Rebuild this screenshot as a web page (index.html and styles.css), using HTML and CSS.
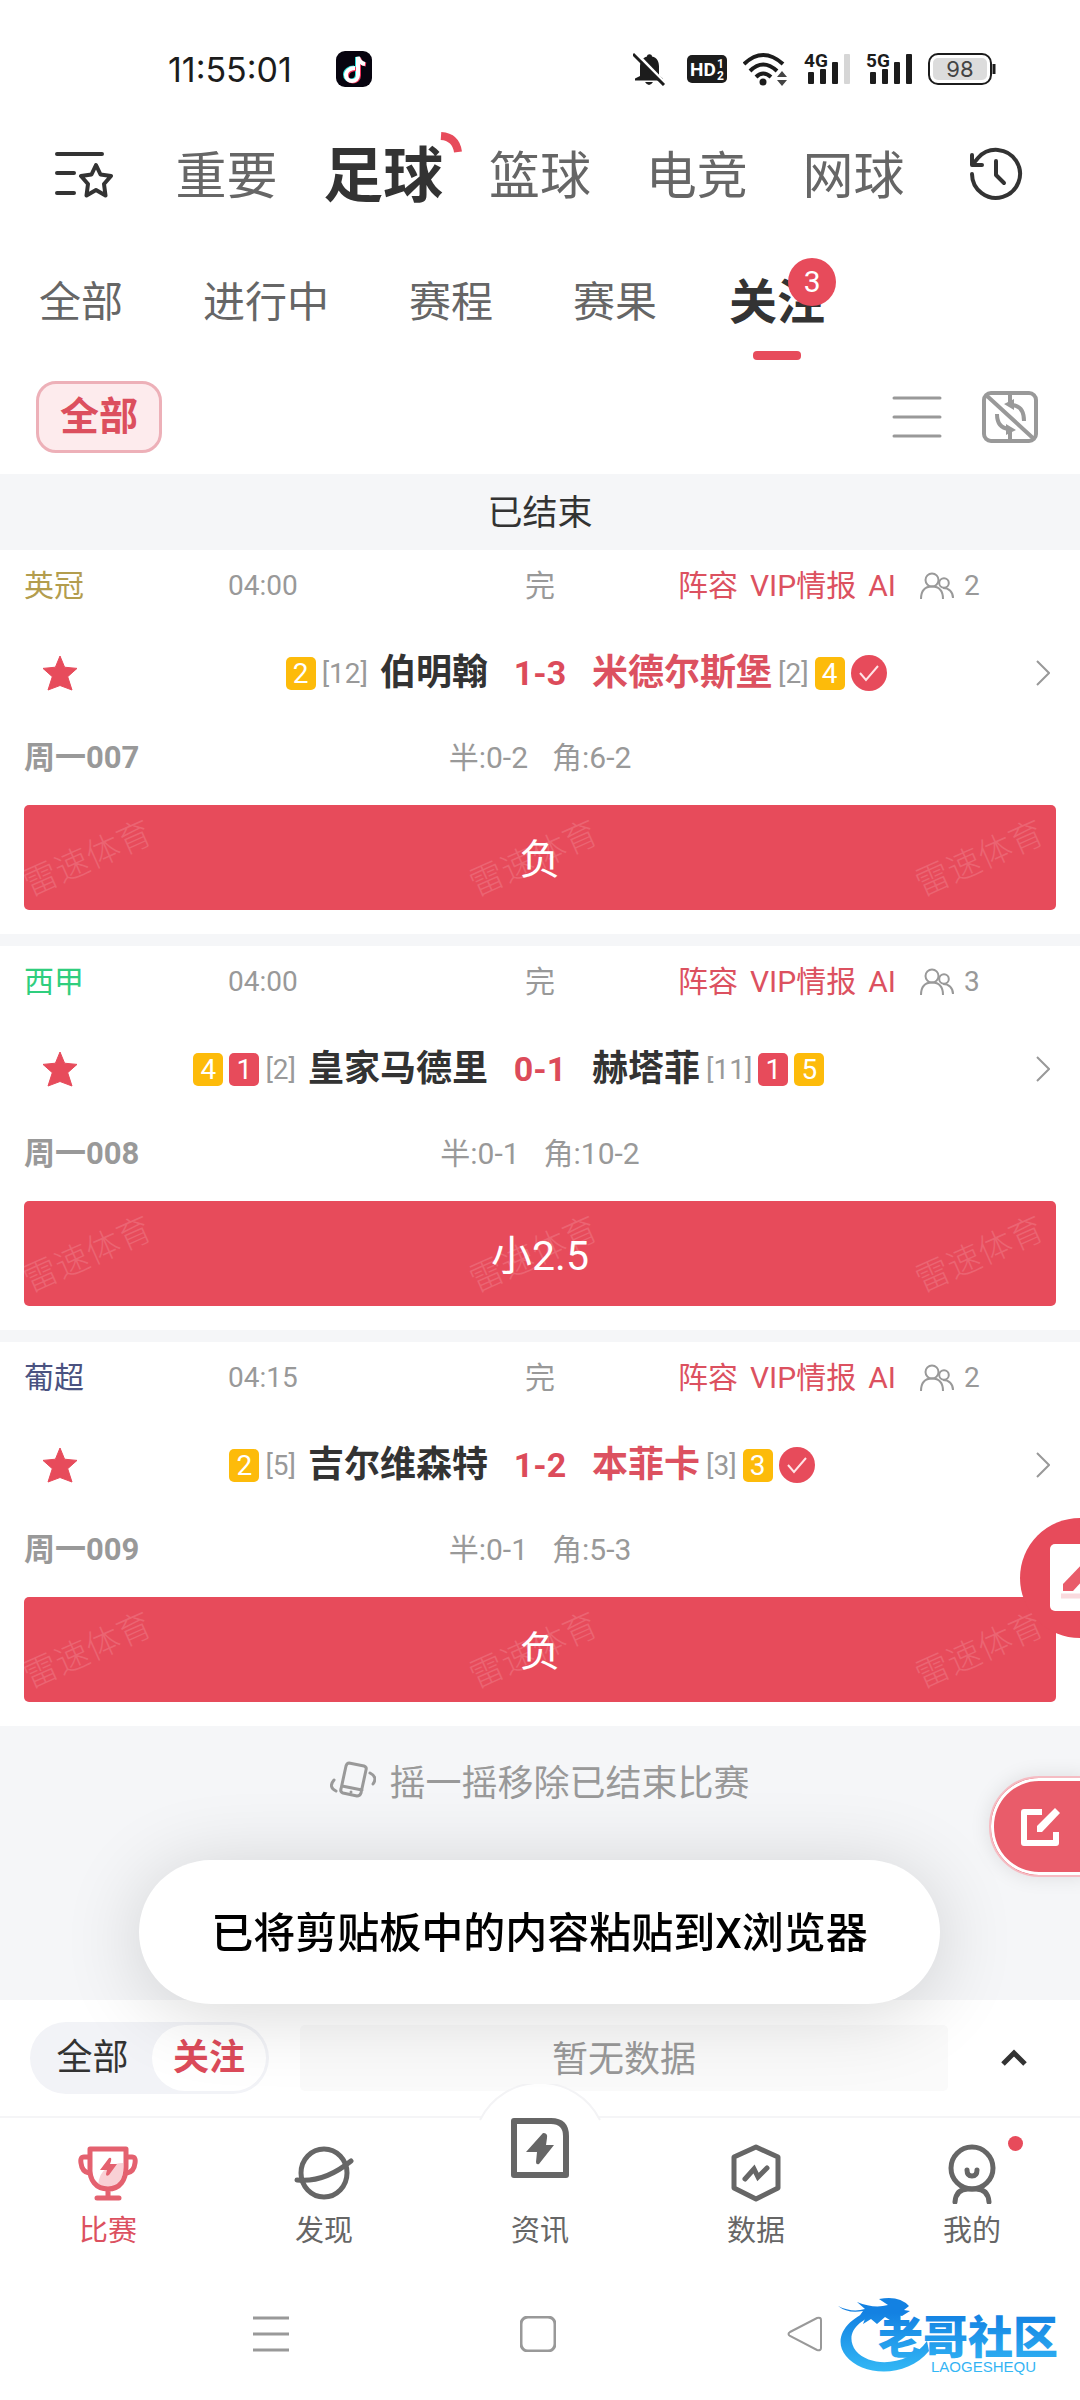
FILE: index.html
```html
<!DOCTYPE html>
<html lang="zh-CN">
<head>
<meta charset="utf-8">
<meta name="viewport" content="width=device-width, initial-scale=1">
<title>足球 - 关注</title>
<link rel="stylesheet" href="styles.css">
</head>
<body>
<svg class="sprite" aria-hidden="true">
  <symbol id="star" viewBox="0 0 36 36"><path d="M18 1l4.600 11.200 12.400 1.200-9.300 8.300 4.300 13.300L18 30.500 6 35l4.300-13.300L1 13.400l12.400-1.200z" fill="#e74b5b" stroke="#e74b5b" stroke-width="1" stroke-linejoin="round"/></symbol>
  <symbol id="people" viewBox="0 0 34 28"><g fill="none" stroke="#999" stroke-width="2"><circle cx="12" cy="8" r="6.500"/><path d="M1 27c0-8 4-12.500 11-12.500S23 19 23 27"/><circle cx="24" cy="11" r="4.800"/><path d="M23 16c6 0 10 4 10 10"/></g></symbol>
  <symbol id="win" viewBox="0 0 36 36"><circle cx="18" cy="18" r="18" fill="#e74b5b"/><path d="M9 18l6 7L27 11" fill="none" stroke="#ffe3e6" stroke-width="2"/></symbol>
  <symbol id="next" viewBox="0 0 14 26"><path d="M1 1l12 12L1 25" fill="none" stroke="#999" stroke-width="2"/></symbol>
</svg>
<div class="page">
  <div class="status">
    <span class="clock">11:55:01</span>
    <svg width="36" height="36" viewBox="0 0 36 36"><rect width="36" height="36" rx="9" fill="#07040f"/><g fill="none" stroke-width="4"><path d="M18 16.500c-5 0-9 3-9 7s3 6 6 6 6-2 6-6V6c1 4 3 6 7 6.500" stroke="#25e0dc"/><path d="M20 18c-5 0-9 3-9 7s3 5.500 6 5.500 6-2 6-6V7c1 4 3 6 7 6.500" stroke="#f0325a"/><path d="M19 17c-5 0-9 3-9 7s3 6 6 6 6-2 6-6V6c1 4 3 6.500 7 7" stroke="#fff"/></g></svg>
    <span class="grow"></span>
    <svg width="38" height="34" viewBox="0 0 38 34"><path d="M7 24V15c0-6 3-9.500 7-10.500 0-3 5-3 5 0 5 1 7 5 7 10v9l4 3v2H2v-2z" fill="#1c1c1c"/><path d="M12 30h8q-4 6-8 0z" fill="#1c1c1c"/><path d="M3 1l30 31" stroke="#fff" stroke-width="3"/><path d="M0 2l31 31" stroke="#1c1c1c" stroke-width="3"/></svg>
    <svg width="40" height="28" viewBox="0 0 40 28"><rect width="40" height="28" rx="5" fill="#1c1c1c"/><text class="glyph" x="3" y="21" font-size="19" fill="#fff">HD</text><text class="glyph" x="30" y="13" font-size="12" fill="#fff">1</text><text class="glyph" x="30" y="25" font-size="12" fill="#fff">2</text></svg>
    <svg width="45" height="34" viewBox="0 0 45 34"><g fill="none" stroke="#1c1c1c" stroke-width="4"><path d="M1 12Q20-6 40 12"/><path d="M7 19Q20 6 34 19"/><path d="M13 25Q20 18 28 25"/></g><circle cx="20" cy="30" r="3.500" fill="#1c1c1c"/><path d="M39 19l5 6H34zM39 34l5-6H34z" fill="#444"/></svg>
    <svg width="46" height="38" viewBox="0 0 46 38"><text class="glyph" x="0" y="17" font-size="19" fill="#1c1c1c">4G</text><g fill="#1c1c1c"><rect x="4" y="22" width="6" height="12" rx="1"/><rect x="16" y="19" width="6" height="15" rx="1"/><rect x="28" y="12" width="6" height="22" rx="1"/></g><rect x="40" y="4" width="6" height="30" rx="1" fill="#d6d6d6"/></svg>
    <svg width="46" height="38" viewBox="0 0 46 38"><text class="glyph" x="0" y="17" font-size="19" fill="#1c1c1c">5G</text><g fill="#1c1c1c"><rect x="4" y="22" width="6" height="12" rx="1"/><rect x="16" y="19" width="6" height="15" rx="1"/><rect x="28" y="12" width="6" height="22" rx="1"/><rect x="40" y="4" width="6" height="30" rx="1"/></g></svg>
    <svg width="68" height="32" viewBox="0 0 68 32"><rect x="1" y="1" width="62" height="30" rx="9" fill="#fff" stroke="#1c1c1c" stroke-width="2"/><rect x="5" y="5" width="54" height="22" rx="5" fill="#dcdcdc"/><path d="M66 11v10" stroke="#1c1c1c" stroke-width="3"/><text class="battery" x="32" y="24" text-anchor="middle">98</text></svg>
  </div>

  <header class="sports">
    <button class="side-left" aria-label="收藏列表"><svg width="58" height="48" viewBox="0 0 58 48"><g fill="none" stroke="#333" stroke-width="4" stroke-linecap="round" stroke-linejoin="round"><path d="M2 4h45M2 23h17M2 43h17"/><path d="M41 15l4.500 9.500L56 26l-7 8 1.500 11.500L41 40l-9.500 5.500L33 34l-7-8 10.500-1.500z"/></g></svg></button>
    <nav class="sport-tabs">
      <a href="#">重要</a>
      <a href="#" class="active">足球<svg class="arc" width="26" height="26" viewBox="0 0 26 26"><path d="M4 5Q19 6 21 21" fill="none" stroke="#e74b5b" stroke-width="8"/></svg></a>
      <a href="#">篮球</a>
      <a href="#">电竞</a>
      <a href="#">网球</a>
    </nav>
    <button class="side-right" aria-label="历史"><svg width="54" height="54" viewBox="0 0 54 54"><g fill="none" stroke="#333" stroke-width="4" stroke-linecap="round" stroke-linejoin="round"><path d="M3 27a24 24 0 1 0 6-16L4 17"/><path d="M3 8v10h10M27 14v14l8 8"/></g></svg></button>
  </header>

  <nav class="filters">
    <a href="#">全部</a>
    <a href="#">进行中</a>
    <a href="#">赛程</a>
    <a href="#">赛果</a>
    <a href="#" class="active">关注<span class="count">3</span></a>
  </nav>

  <div class="tools">
    <button class="chip">全部</button>
    <span class="grow"></span>
    <button aria-label="列表"><svg width="50" height="42" viewBox="0 0 50 42"><path d="M2 2h46M2 21h46M2 40h46" stroke="#999" stroke-width="3" stroke-linecap="round"/></svg></button>
    <button aria-label="隐藏动画"><svg width="56" height="52" viewBox="0 0 56 52"><g fill="none" stroke="#999" stroke-width="4"><rect x="2" y="2" width="52" height="48" rx="7"/><path d="M4 4l48 44M28 2v10M28 40v10M30 14q12 1 12 16M27 38q-12-1-12-15"/></g><path d="M22 13l10-5v11zM34 39l-10-6v11z" fill="#999"/></svg></button>
  </div>

  <main class="list">
    <h2 class="section">已结束</h2>

    <article class="match">
      <div class="meta">
        <div class="when"><span class="league gold">英冠</span><time>04:00</time></div>
        <span>完</span>
        <div class="tags"><a href="#">阵容</a><a href="#">VIP情报</a><a href="#">AI</a><span class="chat"><svg width="34" height="28"><use href="#people"/></svg>2</span></div>
      </div>
      <div class="teams">
        <button class="fav" aria-label="取消关注"><svg width="36" height="36"><use href="#star"/></svg></button>
        <div class="team home"><span class="card yellow">2</span><span class="rank">[12]</span><strong>伯明翰</strong></div>
        <span class="score">1-3</span>
        <div class="team away won"><strong>米德尔斯堡</strong><span class="rank">[2]</span><span class="card yellow">4</span><svg width="36" height="36"><use href="#win"/></svg></div>
        <button class="more" aria-label="详情"><svg width="14" height="26"><use href="#next"/></svg></button>
      </div>
      <div class="detail"><b>周一007</b><span class="stats"><span>半:0-2</span><span>角:6-2</span></span></div>
      <div class="result"><div class="marks"><span>雷速体育</span><span>雷速体育</span><span>雷速体育</span></div><span class="pick">负</span></div>
    </article>

    <article class="match">
      <div class="meta">
        <div class="when"><span class="league green">西甲</span><time>04:00</time></div>
        <span>完</span>
        <div class="tags"><a href="#">阵容</a><a href="#">VIP情报</a><a href="#">AI</a><span class="chat"><svg width="34" height="28"><use href="#people"/></svg>3</span></div>
      </div>
      <div class="teams">
        <button class="fav" aria-label="取消关注"><svg width="36" height="36"><use href="#star"/></svg></button>
        <div class="team home"><span class="card yellow">4</span><span class="card red">1</span><span class="rank">[2]</span><strong>皇家马德里</strong></div>
        <span class="score">0-1</span>
        <div class="team away"><strong>赫塔菲</strong><span class="rank">[11]</span><span class="card red">1</span><span class="card yellow">5</span></div>
        <button class="more" aria-label="详情"><svg width="14" height="26"><use href="#next"/></svg></button>
      </div>
      <div class="detail"><b>周一008</b><span class="stats"><span>半:0-1</span><span>角:10-2</span></span></div>
      <div class="result"><div class="marks"><span>雷速体育</span><span>雷速体育</span><span>雷速体育</span></div><span class="pick">小2.5</span></div>
    </article>

    <article class="match">
      <div class="meta">
        <div class="when"><span class="league navy">葡超</span><time>04:15</time></div>
        <span>完</span>
        <div class="tags"><a href="#">阵容</a><a href="#">VIP情报</a><a href="#">AI</a><span class="chat"><svg width="34" height="28"><use href="#people"/></svg>2</span></div>
      </div>
      <div class="teams">
        <button class="fav" aria-label="取消关注"><svg width="36" height="36"><use href="#star"/></svg></button>
        <div class="team home"><span class="card yellow">2</span><span class="rank">[5]</span><strong>吉尔维森特</strong></div>
        <span class="score">1-2</span>
        <div class="team away won"><strong>本菲卡</strong><span class="rank">[3]</span><span class="card yellow">3</span><svg width="36" height="36"><use href="#win"/></svg></div>
        <button class="more" aria-label="详情"><svg width="14" height="26"><use href="#next"/></svg></button>
      </div>
      <div class="detail"><b>周一009</b><span class="stats"><span>半:0-1</span><span>角:5-3</span></span></div>
      <div class="result"><div class="marks"><span>雷速体育</span><span>雷速体育</span><span>雷速体育</span></div><span class="pick">负</span></div>
    </article>

    <p class="shake"><svg width="46" height="38" viewBox="0 0 46 38"><g fill="none" stroke="#999" stroke-width="3" stroke-linecap="round" stroke-linejoin="round"><path d="M19 2l15 3q3 1 2 4l-5 23q-1 3-4 3l-14-3q-3-1-2-4l5-23q1-3 3-3zM12 25l20 4"/><path d="M4 19q-6 7 2 11M40 12q8 4 3 11"/></g><circle cx="21" cy="31" r="1.500" fill="#999"/></svg>摇一摇移除已结束比赛</p>
  </main>

  <div class="dock">
    <div class="switch"><button>全部</button><button class="on">关注</button></div>
    <div class="empty">暂无数据</div>
    <button class="expand" aria-label="展开"><svg width="28" height="18" viewBox="0 0 28 18"><path d="M3 15L14 4l11 11" fill="none" stroke="#333" stroke-width="5"/></svg></button>
  </div>

  <nav class="tabbar">
    <svg class="bump" width="134" height="44" viewBox="0 0 134 44"><path d="M7 36A67 67 0 0 1 127 36V44H7z" fill="#fff"/><path d="M7 36A67 67 0 0 1 127 36" fill="none" stroke="#f3f3f5" stroke-width="2"/></svg>
    <a href="#" class="active"><svg width="60" height="60" viewBox="0 0 60 60"><path d="M20 42q1-14 10-18 6-5 15-5v8q-1 14-15 17-6 1-10-2z" fill="#f9d0d5"/><g fill="none" stroke="#e4616f" stroke-width="5" stroke-linecap="round" stroke-linejoin="round"><path d="M12 5h36v18c0 13-6 22-18 22S11 36 12 23zM30 45v9M19 54h22"/><path d="M11 13H6q-4 0-3 6 1 9 8 10M49 13h5q4 0 3 6-1 9-8 10"/></g><path d="M31 14q3-1 2 3l-1 3h7l-8 11q-3 2-3-1l1-4h-7z" fill="#e4616f"/></svg>比赛</a>
    <a href="#"><svg width="60" height="60" viewBox="0 0 60 60"><g fill="none" stroke="#666" stroke-width="5" stroke-linecap="round"><ellipse cx="30" cy="29" rx="23" ry="24"/><path d="M3 36Q30 39 57 17"/></g></svg>发现</a>
    <a href="#" class="raised"><svg width="60" height="60" viewBox="0 0 60 60"><path d="M4 3h37q15 0 15 15v39H4z" fill="none" stroke="#666" stroke-width="6" stroke-linejoin="round"/><path d="M33 15q5 0 4 5l-1 7h8L29 46q-3 1-3-2l1-10H16z" fill="#666"/></svg>资讯</a>
    <a href="#"><svg width="60" height="60" viewBox="0 0 60 60"><path d="M30 3l22 10v31L30 55 8 44V13z" fill="none" stroke="#666" stroke-width="5" stroke-linejoin="round"/><path d="M19 35l9-10 4 8 9-9" fill="none" stroke="#666" stroke-width="5" stroke-linecap="round"/></svg>数据</a>
    <a href="#"><svg width="60" height="60" viewBox="0 0 60 60"><g fill="none" stroke="#666" stroke-width="5" stroke-linecap="round"><circle cx="30" cy="24" r="21"/><path d="M25 26q0 6 5 6t5-6M13 58q1-13 13-13h8q12 0 13 13"/></g></svg>我的<i class="dot"></i></a>
  </nav>

  <div class="sysnav">
    <button aria-label="菜单"><svg width="36" height="36" viewBox="0 0 36 36"><path d="M0 2h36M0 18h36M0 34h36" stroke="#999" stroke-width="3"/></svg></button>
    <button aria-label="主页"><svg width="36" height="36" viewBox="0 0 36 36"><rect x="1" y="1" width="34" height="34" rx="7" fill="none" stroke="#999" stroke-width="3"/></svg></button>
    <button aria-label="返回"><svg width="36" height="36" viewBox="0 0 36 36"><path d="M3 16L30 2q4-1 4 2v28q0 3-4 2L3 20q-3-2 0-4z" fill="none" stroke="#999" stroke-width="2"/></svg></button>
    <svg class="logo" width="228" height="80" viewBox="0 0 228 80">
      <defs><linearGradient id="blue" x1="0" y1="0" x2="0" y2="80" gradientUnits="userSpaceOnUse"><stop offset=".2" stop-color="#1381e2"/><stop offset="1" stop-color="#36bdf7"/></linearGradient></defs>
      <g fill="url(#blue)">
        <path d="M38 12C8 20-6 42 8 59c16 20 60 23 83-5l-2-10C72 68 34 72 18 54 6 38 19 22 42 17z"/>
        <path d="M0 9q14 7 27 3l-8-7q17 7 31 3l-9-6q20-4 30 7l-5 4 6 1-8 5-6-1-3 7-8-5-8 7-6-5-8 5 3-8-8 2 5-7Q10 17 0 9z"/>
        <text class="logo-name" x="40" y="57">老哥社区</text>
        <text class="logo-sub" x="93" y="75">LAOGESHEQU</text>
      </g>
    </svg>
  </div>
</div>

<button class="float-note" aria-label="笔记"><svg width="120" height="120" viewBox="0 0 120 120"><rect x="30" y="26" width="62" height="67" rx="5" fill="#fff"/><path d="M43 66l24-25 8 8-22 24H43z" fill="#e95c6a"/><path d="M41 78h36" stroke="#fadade" stroke-width="5"/></svg></button>
<button class="float-edit" aria-label="编辑"><svg width="40" height="40" viewBox="0 0 40 40"><path d="M21 5H3v31h32V25" fill="none" stroke="#fff" stroke-width="6" stroke-linejoin="round"/><path d="M16 25v-6L34 1l5 5-18 19z" fill="#fff"/></svg></button>
<div class="toast" role="status">已将剪贴板中的内容粘贴到X浏览器</div>
</body>
</html>
```
FILE: styles.css
```css
* { box-sizing: border-box; }

body {
  margin: 0;
  background: #fff;
  color: #333;
  font-family: Roboto, "Noto Sans CJK SC", sans-serif;
}

a { color: inherit; text-decoration: none; }

button {
  display: flex;
  align-items: center;
  margin: 0;
  padding: 0;
  border: 0;
  background: none;
  color: inherit;
  font: inherit;
}

svg { display: block; flex: none; }

.sprite { position: absolute; width: 0; height: 0; }
.grow { flex: 1; }

.page {
  display: flex;
  flex-direction: column;
  min-height: 100vh;
}

/* phone status bar */
.status {
  display: flex;
  align-items: center;
  gap: 16px;
  height: 138px;
  padding: 0 84px 0 168px;
}
.clock {
  margin-right: 28px;
  color: #1c1c1c;
  font-family: Inter, sans-serif;
  font-size: 34px;
}
.glyph { font-family: Roboto, sans-serif; font-weight: 700; }
.battery { fill: #444; font-family: Inter, sans-serif; font-size: 22px; }

/* sport tabs */
.sports { display: flex; align-items: center; height: 72px; }
.side-left { flex: 0 0 148px; padding-left: 55px; }
.side-right { flex: 0 0 148px; padding-left: 37px; }
.sport-tabs {
  display: grid;
  flex: 1;
  grid-template-columns: repeat(5, 1fr);
  align-items: center;
  padding-top: 6px;
  color: #666;
  font-size: 51px;
  line-height: 72px;
  text-align: center;
}
.sport-tabs .active {
  position: relative;
  color: #333;
  font-size: 60px;
  font-weight: 700;
}
.arc { position: absolute; top: -10px; right: -1px; }

/* status filter tabs */
.filters {
  display: flex;
  gap: 80px;
  height: 150px;
  padding: 63px 40px 0 39px;
  color: #666;
  font-size: 42px;
  line-height: 60px;
}
.filters .active {
  position: relative;
  margin-left: -8px;
  color: #333;
  font-size: 48px;
  font-weight: 700;
}
.filters .active::after {
  content: "";
  display: block;
  width: 48px;
  height: 9px;
  margin: 18px auto 0;
  border-radius: 4px;
  background: #e74b5b;
}
.count {
  position: absolute;
  top: -15px;
  right: -11px;
  width: 48px;
  height: 48px;
  border-radius: 50%;
  background: #e74b5b;
  color: #fff;
  font-size: 30px;
  font-weight: 400;
  line-height: 48px;
  text-align: center;
}

.tools {
  display: flex;
  align-items: center;
  gap: 40px;
  padding: 21px 42px 21px 36px;
}
.chip {
  height: 72px;
  padding: 0 21px;
  border: 3px solid #edb0b8;
  border-radius: 20px;
  background: #fdebed;
  color: #dc4f5e;
  font-size: 39px;
  font-weight: 700;
  line-height: 66px;
}

/* match list */
.list { flex: 1; background: #f5f6f8; }
.section {
  margin: 0;
  padding-top: 4px;
  color: #333;
  font-size: 35px;
  font-weight: 400;
  line-height: 72px;
  text-align: center;
}
.match {
  padding: 12px 24px 24px;
  background: #fff;
  color: #999;
  font-size: 30px;
}
.match + .match { margin-top: 12px; }

.meta {
  display: grid;
  grid-template-columns: 1fr 30px 1fr;
  height: 48px;
  line-height: 48px;
}
.when { display: flex; }
.when time { font-size: 28px; }
.league { width: 204px; }
.gold { color: #b39d4e; }
.green { color: #2fce7e; }
.navy { color: #4a5280; }
.tags {
  display: flex;
  gap: 12px;
  padding-left: 123px;
  color: #dc5160;
}
.chat {
  display: flex;
  align-items: center;
  gap: 10px;
  margin-left: 12px;
  color: #999;
  font-size: 28px;
}

.teams { display: flex; align-items: center; height: 126px; }
.fav { flex: 0 0 72px; height: 60px; justify-content: center; }
.more { flex: 0 0 72px; height: 60px; justify-content: flex-end; padding-right: 6px; }
.team { display: flex; flex: 1; align-items: center; gap: 6px; font-size: 28px; }
.team strong { color: #333; font-size: 36px; line-height: 40px; }
.home { justify-content: flex-end; }
.home strong { margin-left: 6px; }
.team.won strong { color: #dc5160; }
.score {
  width: 104px;
  color: #dc4b5a;
  font-size: 34px;
  font-weight: 700;
  text-align: center;
}
.card {
  width: 30px;
  height: 33px;
  border-radius: 5px;
  color: #fff;
  line-height: 34px;
  text-align: center;
}
.yellow { background: #fdbb0a; }
.red { background: #e74b5b; }

.detail {
  display: grid;
  grid-template-columns: 1fr auto 1fr;
  height: 69px;
  line-height: 44px;
}
.detail b { font-size: 31px; }
.stats { display: flex; gap: 24px; }

.result {
  position: relative;
  overflow: hidden;
  padding-top: 5px;
  border-radius: 5px;
  background: #e74b5b;
  color: #fff;
  font-size: 41px;
  line-height: 100px;
  text-align: center;
}
.pick { position: relative; }
.marks {
  position: absolute;
  inset: 3px 8px 0 -4px;
  display: flex;
  justify-content: space-between;
  color: #eb6472;
  font-size: 34px;
  font-weight: 300;
}
.marks span { transform: rotate(-24deg); }

.shake {
  display: flex;
  align-items: center;
  justify-content: center;
  gap: 13px;
  height: 108px;
  margin: 0;
  color: #999;
  font-size: 36px;
}

/* quick bar above the tab bar */
.dock {
  display: flex;
  align-items: center;
  padding: 22px 30px;
  font-size: 36px;
}
.switch {
  display: flex;
  width: 239px;
  height: 72px;
  padding: 3px;
  border-radius: 36px;
  background: #f2f3f7;
}
.switch button { flex: 1; justify-content: center; border-radius: 33px; line-height: 66px; }
.switch .on { flex: 0 0 114px; background: #fff; color: #dc4b5a; font-weight: 700; }
.empty {
  flex: 1;
  margin: 0 52px 0 31px;
  padding-top: 4px;
  border-radius: 5px;
  background: #fafafa;
  color: #999;
  line-height: 62px;
  text-align: center;
}
.expand { padding-right: 22px; height: 60px; }

.tabbar {
  position: relative;
  display: grid;
  grid-template-columns: repeat(5, 1fr);
  border-top: 2px solid #f5f5f7;
  color: #666;
  font-size: 29px;
  line-height: 54px;
}
.tabbar a {
  position: relative;
  display: flex;
  flex-direction: column;
  align-items: center;
  padding-top: 26px;
}
.tabbar .active { color: #dc5160; }
.tabbar .raised { justify-content: space-between; padding-top: 0; }
.bump { position: absolute; top: -34px; left: calc(50% - 67px); }
.dot {
  position: absolute;
  top: 18px;
  left: calc(50% + 36px);
  width: 15px;
  height: 15px;
  border-radius: 50%;
  background: #e74b5b;
}

.sysnav {
  position: relative;
  display: grid;
  grid-template-columns: repeat(3, 1fr);
  height: 142px;
  padding: 18px 142px 8px 138px;
}
.sysnav button { justify-content: center; }
.logo { position: absolute; top: 39px; right: 14px; }
.logo-name { font-family: "Noto Sans CJK SC", sans-serif; font-size: 45px; font-weight: 900; }
.logo-sub { font-family: "Liberation Sans", sans-serif; font-size: 15px; }

/* floating layer */
.float-note {
  position: fixed;
  right: -60px;
  bottom: 762px;
  border-radius: 50%;
  background: #e74b5b;
}
.float-edit {
  position: fixed;
  right: -8px;
  bottom: 523px;
  width: 99px;
  height: 101px;
  padding-left: 30px;
  border: 2px solid #f5bcc3;
  border-radius: 50px 0 0 50px;
  background: #e95c6a;
  box-shadow: inset 0 0 0 3px #fff, 0 0 20px rgba(0, 0, 0, 0.1);
}
.toast {
  position: fixed;
  right: 140px;
  bottom: 396px;
  left: 139px;
  padding-top: 4px;
  border-radius: 72px;
  background: #fff;
  box-shadow: 0 8px 80px rgba(0, 0, 0, 0.16);
  color: #000;
  font-size: 42px;
  font-weight: 500;
  line-height: 140px;
  text-align: center;
}
```
